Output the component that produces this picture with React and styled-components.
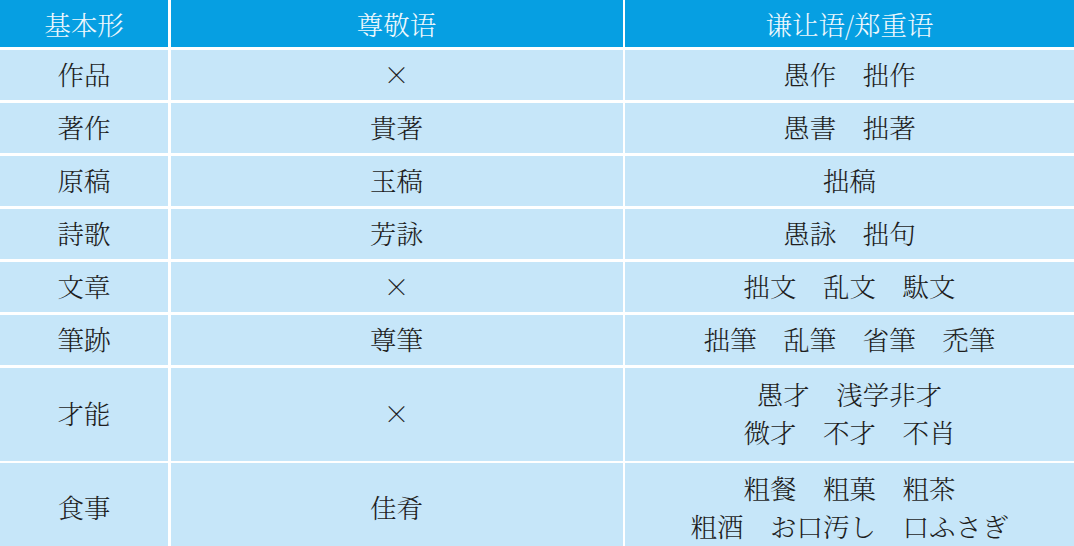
import styled, { createGlobalStyle } from 'styled-components';

const GlobalStyle = createGlobalStyle`
  html, body {
    margin: 0;
    padding: 0;
    background: #ffffff;
    overflow: hidden;
  }
  body {
    font-family: "Noto Serif CJK JP", "Noto Sans CJK JP", "Noto Sans CJK SC", serif;
  }
`;

const Table = styled.div`
  display: grid;
  grid-template-columns: 168px 452px 1fr;
  grid-template-rows: 47px repeat(6, 50.5px) 93px 90px;
  gap: 2.5px;
  width: 1074px;
  background: #ffffff;
`;

const HeadCell = styled.div`
  background: #069fe2;
  color: #eef8fd;
  display: flex;
  align-items: center;
  justify-content: center;
  font-size: 26.5px;
  font-weight: 300;
`;

const Cell = styled.div`
  background: #c6e6f9;
  color: #1e1e1e;
  display: flex;
  flex-direction: column;
  align-items: center;
  justify-content: center;
  font-size: 26.5px;
  font-weight: 300;
  line-height: 38.5px;
  padding-bottom: 2px;
`;

const Line = styled.span`
  white-space: pre;
`;

const rows = [
  ['作品', '×', ['愚作　拙作']],
  ['著作', '貴著', ['愚書　拙著']],
  ['原稿', '玉稿', ['拙稿']],
  ['詩歌', '芳詠', ['愚詠　拙句']],
  ['文章', '×', ['拙文　乱文　駄文']],
  ['筆跡', '尊筆', ['拙筆　乱筆　省筆　禿筆']],
  ['才能', '×', ['愚才　浅学非才', '微才　不才　不肖']],
  ['食事', '佳肴', ['粗餐　粗菓　粗茶', '粗酒　お口汚し　口ふさぎ']],
];

export default function App() {
  return (
    <>
      <GlobalStyle />
      <Table>
        <HeadCell>基本形</HeadCell>
        <HeadCell>尊敬语</HeadCell>
        <HeadCell>谦让语/郑重语</HeadCell>
        {rows.map(([base, honor, humble]) => (
          <>
            <Cell key={base + 'a'}>{base}</Cell>
            <Cell key={base + 'b'}>{honor}</Cell>
            <Cell key={base + 'c'}>
              {humble.map((line) => (
                <Line key={line}>{line}</Line>
              ))}
            </Cell>
          </>
        ))}
      </Table>
    </>
  );
}
